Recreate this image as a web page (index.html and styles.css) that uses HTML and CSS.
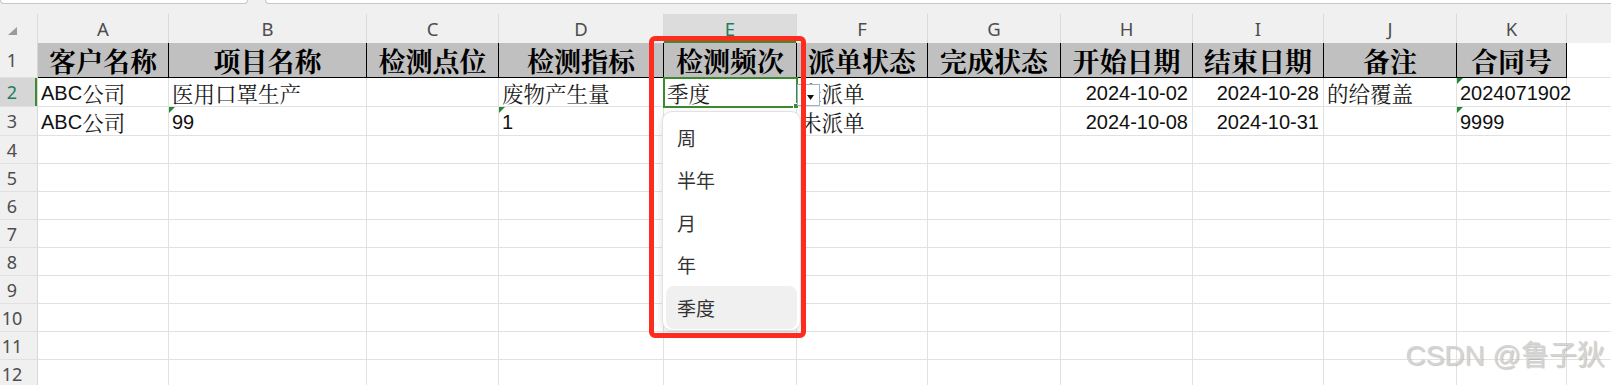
FILE: index.html
```html
<!DOCTYPE html>
<html lang="zh-CN">
<head>
    <meta charset="UTF-8">
    <meta name="viewport" content="width=device-width, initial-scale=1.0">
    <title>检测任务表</title>
    <link rel="stylesheet" href="styles.css">
</head>
<body>
    <div class="page">
        <div class="tabs">
            <div class="tab"></div>
            <div class="tab tab-wide"></div>
        </div>

        <div class="sheet" id="sheet">
            <!-- cells are built by the script below -->
        </div>

        <!-- data validation list on E2 -->
        <div class="dd-btn">
            <svg width="7" height="5" viewBox="0 0 7 5"><polygon points="0,0 7,0 3.5,5" fill="#111"/></svg>
        </div>
        <div class="dd-list">
            <div class="dd-item">周</div>
            <div class="dd-item">半年</div>
            <div class="dd-item">月</div>
            <div class="dd-item">年</div>
            <div class="dd-item hover">季度</div>
        </div>

        <div class="mark"></div>
        <div class="watermark">CSDN @鲁子狄</div>
    </div>

    <script>
        // last column is only partly on screen, its letter is off the edge
        const letters = ['A', 'B', 'C', 'D', 'E', 'F', 'G', 'H', 'I', 'J', 'K', ''];
        const titles = ['客户名称', '项目名称', '检测点位', '检测指标', '检测频次', '派单状态', '完成状态', '开始日期', '结束日期', '备注', '合同号'];
        const rows = [
            ['ABC公司', '医用口罩生产', '', '废物产生量', '季度', '未派单', '', '2024-10-02', '2024-10-28', '的给覆盖', '2024071902', ''],
            ['ABC公司', '99', '', '1', '', '未派单', '', '2024-10-08', '2024-10-31', '', '9999', '']
        ];
        // numbers stored as text get the little green corner
        const flagged = { 2: [10], 3: [1, 3, 10] };
        const rightAligned = [7, 8];
        const activeRow = 2;
        const activeCol = 4;

        const sheet = document.getElementById('sheet');

        function addCell(text, cls) {
            const cell = document.createElement('div');
            cell.className = 'cell ' + (cls || '');
            cell.textContent = text;
            sheet.appendChild(cell);
            return cell;
        }

        // chinese runs render a bit larger than the latin text in the sheet
        function addDataCell(text, cls) {
            const cell = addCell('', cls);
            cell.innerHTML = text.replace(/[\u4e00-\u9fff]+/g, m => `<span class="cjk">${m}</span>`);
            return cell;
        }

        // column letters
        const corner = addCell('', 'corner');
        corner.innerHTML = '<svg width="9" height="8" viewBox="0 0 9 8"><polygon points="9,0 9,8 0,8" fill="#9a9a9a"/></svg>';
        letters.forEach((letter, i) => {
            addCell(letter, 'col-head' + (i === activeCol ? ' col-active' : ''));
        });

        // title row
        addCell('1', 'row-head');
        letters.forEach((letter, i) => {
            addCell(titles[i] || '', titles[i] ? 'title' : '');
        });

        // data rows
        for (let r = 2; r <= 12; r++) {
            addCell(String(r), 'row-head' + (r === activeRow ? ' row-active' : ''));
            const values = rows[r - 2] || [];
            letters.forEach((letter, i) => {
                let cls = '';
                if (rightAligned.includes(i)) cls += ' right';
                if (flagged[r] && flagged[r].includes(i)) cls += ' flag';
                if (r === activeRow && i === activeCol) cls += ' active';
                addDataCell(values[i] || '', cls);
            });
        }
    </script>
</body>
</html>
```

FILE: styles.css
```css
body {
    margin: 0;
    background-color: #fff;
    font-family: "Liberation Sans", "Noto Serif CJK SC", "Noto Sans CJK SC", sans-serif;
    overflow: hidden;
}
.page {
    position: relative;
    width: 1611px;
    height: 385px;
    overflow: hidden;
    background-color: #f0f0f0;
}
.tabs {
    display: flex;
    gap: 17px;
    height: 14px;
}
.tab {
    width: 246px;
    height: 3px;
    background: #fff;
    border: 1px solid #c6c6c6;
    border-top: none;
    border-radius: 0 0 6px 6px;
}
.tab-wide {
    flex: 1;
    border-right: none;
    border-radius: 0 0 0 6px;
}
.sheet {
    display: grid;
    grid-template-columns: 38px 131px 198px 132px 165px 133px 131px 133px 132px 131px 133px 110px 131px;
    grid-template-rows: 29px 35px 29px 29px repeat(9, 28px);
    background-color: #fff;
}
.cell {
    position: relative;
    box-sizing: border-box;
    display: flex;
    align-items: flex-end;
    padding: 0 3px 1px;
    border-right: 1px solid #e1e1e1;
    border-bottom: 1px solid #e1e1e1;
    font-size: 20px;
    line-height: 24px;
    color: #111;
    white-space: nowrap;
}
.cjk {
    font-family: "Noto Serif CJK SC", "Noto Sans CJK SC", serif;
    font-size: 21.5px;
    color: #1a1a1a;
}
.cell.right {
    justify-content: flex-end;
    padding-right: 4px;
}
.cell.flag::before {
    content: "";
    position: absolute;
    top: 0;
    left: 0;
    border-top: 6px solid #1e8a32;
    border-right: 6px solid transparent;
}
.corner {
    background-color: #f0f0f0;
    border-bottom: none;
    border-right-color: #dadada;
    justify-content: flex-end;
    align-items: flex-start;
    padding: 13px 20px 0 0;
}
.col-head {
    background-color: #f0f0f0;
    border-bottom: none;
    border-right-color: #dadada;
    justify-content: center;
    align-items: center;
    padding: 1px 0 0;
    font-family: "Noto Sans", sans-serif;
    font-size: 18.5px;
    color: #4d4d4d;
}
.col-active {
    background-color: #dcdcdc;
    color: #1a7f5e;
    box-shadow: inset 0 -2px 0 #3d8b2e;
}
.row-head {
    background-color: #f0f0f0;
    border-right-color: #d6d6d6;
    justify-content: center;
    align-items: center;
    padding: 0 13px 0 0;
    font-family: "Noto Sans", sans-serif;
    font-size: 18px;
    color: #4d4d4d;
}
.row-active {
    background-color: #d6d6d6;
    color: #1a7f5e;
    box-shadow: inset -2px 0 0 #3d8b2e;
}
.title {
    background-color: #c0c0c0;
    border-right: 1px solid #000;
    border-bottom: 1px solid #000;
    justify-content: center;
    align-items: center;
    padding: 2px 0 0;
    font-family: "Noto Serif CJK SC", "Noto Sans CJK SC", serif;
    font-weight: 700;
    font-size: 27px;
    color: #000;
}
.active {
    z-index: 2;
    outline: 2px solid #3d8b2e;
    outline-offset: -1px;
}
.active::after {
    content: "";
    position: absolute;
    right: -3px;
    bottom: -3px;
    width: 4px;
    height: 4px;
    background-color: #3d8b2e;
    border: 1px solid #fff;
}
.dd-btn {
    position: absolute;
    left: 797px;
    top: 84px;
    width: 23px;
    height: 22px;
    box-sizing: border-box;
    display: flex;
    align-items: flex-end;
    justify-content: center;
    padding: 0 0 5px 3px;
    background-color: #fff;
    border: 1px solid #9cb1cc;
    z-index: 3;
}
.dd-list {
    position: absolute;
    left: 662px;
    top: 111px;
    width: 139px;
    height: 220px;
    box-sizing: border-box;
    padding: 4px 3px 3px;
    background-color: #fff;
    border: 1px solid #e2e2e2;
    border-radius: 10px;
    box-shadow: 0 3px 10px rgba(0, 0, 0, 0.12);
    font-family: "Noto Sans CJK SC", sans-serif;
    font-size: 19px;
    color: #333;
    z-index: 4;
}
.dd-item {
    display: flex;
    align-items: center;
    height: 42.5px;
    padding-left: 11px;
    border-radius: 8px;
}
.dd-item.hover {
    background-color: #f0f0f0;
}
.mark {
    position: absolute;
    left: 649px;
    top: 36px;
    width: 157px;
    height: 302px;
    box-sizing: border-box;
    border: 5px solid #fe2b1f;
    border-radius: 6px;
    z-index: 5;
}
.watermark {
    position: absolute;
    right: 6px;
    top: 340px;
    font-family: "Liberation Sans", "Noto Sans CJK SC", sans-serif;
    font-size: 28px;
    line-height: 32px;
    color: #d4d4d4;
    text-shadow: 1px 1px 1px rgba(0, 0, 0, 0.22);
    z-index: 6;
}
```
